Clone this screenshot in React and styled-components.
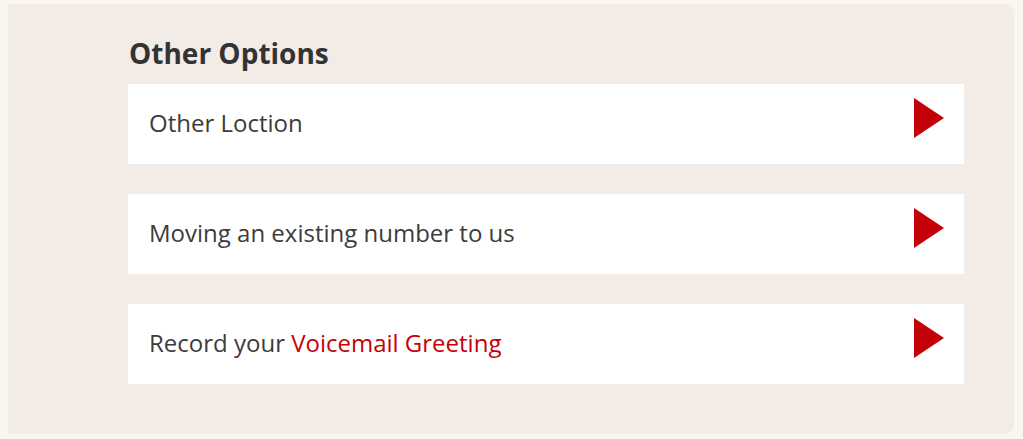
import React from "react";
import styled, { createGlobalStyle } from "styled-components";

const GlobalStyle = createGlobalStyle`
  html, body {
    margin: 0;
    padding: 0;
    background: #f9f6f1;
  }
  body {
    font-family: "Open Sans", "Liberation Sans", sans-serif;
  }
`;

const Page = styled.div`
  padding: 4px 9px 5px 8px;
`;

const Panel = styled.section`
  background: #f3ebe5;
  border-radius: 0 10px 10px 0;
  height: 430px;
  box-sizing: border-box;
  padding: 32px 50px 0 120px;
`;

const Heading = styled.h2`
  margin: 0 0 14px 1px;
  font-size: 28px;
  line-height: 34px;
  font-weight: 700;
  color: #333333;
`;

const List = styled.div`
  display: flex;
  flex-direction: column;
  gap: 30px;
`;

const Row = styled.a`
  display: flex;
  align-items: center;
  justify-content: space-between;
  height: 80px;
  background: #ffffff;
  padding: 0 20px 0 21px;
  text-decoration: none;
  cursor: pointer;
`;

const Label = styled.span`
  font-size: 24px;
  line-height: 32px;
  margin-top: -2px;
  color: #3c3c3c;
`;

const Accent = styled.span`
  color: #c8000a;
`;

const Arrow = styled.svg`
  width: 30px;
  height: 40px;
  margin-top: -12px;
  flex-shrink: 0;
`;

const Triangle = () => (
  <Arrow viewBox="0 0 30 40">
    <polygon points="0,0 30,20 0,40" fill="#c40009" />
  </Arrow>
);

const options = [
  { key: "loc", label: <>Other Loction</> },
  { key: "move", label: <>Moving an existing number to us</> },
  {
    key: "voice",
    label: (
      <>
        Record your <Accent>Voicemail Greeting</Accent>
      </>
    ),
  },
];

export default function App() {
  return (
    <>
      <GlobalStyle />
      <Page>
        <Panel>
          <Heading>Other Options</Heading>
          <List>
            {options.map((o) => (
              <Row key={o.key}>
                <Label>{o.label}</Label>
                <Triangle />
              </Row>
            ))}
          </List>
        </Panel>
      </Page>
    </>
  );
}
